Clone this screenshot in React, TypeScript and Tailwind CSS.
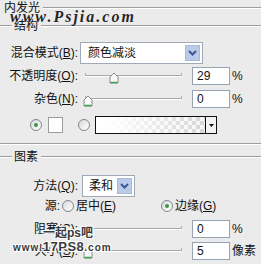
import type { ReactNode } from 'react';

const font = 'font-["Liberation_Sans","Noto_Sans_CJK_SC",sans-serif]';

function Line({ className = '' }: { className?: string }) {
    return <div className={`h-[2px] border-t border-[#9d9d9d] border-b border-b-white ${className}`} />;
}

function Legend({ text, lead }: { text: string; lead: number }) {
    return (
        <div className="flex items-center h-[12px]">
            {lead > 0 ? <Line className="w-[12px]" /> : null}
            <span className={lead > 0 ? 'ml-[2px] mr-[3px]' : 'ml-[4px] mr-[3px]'}>{text}</span>
            <Line className="flex-1" />
        </div>
    );
}

function Label({ children, w = 78 }: { children: ReactNode; w?: number }) {
    return (
        <div className={w === 78 ? 'w-[78px] text-right whitespace-nowrap' : 'w-[60px] text-right whitespace-nowrap'}>
            {children}
        </div>
    );
}

function Chevron() {
    return (
        <div className="shrink-0 w-[15px] h-[16px] bg-[#bccaea] border border-[#a9b8dc] flex items-center justify-center">
            <svg width="9" height="6" viewBox="0 0 9 6">
                <path d="M1 1 L4.5 4.5 L8 1" fill="none" stroke="#3d5696" strokeWidth="2" />
            </svg>
        </div>
    );
}

function Thumb({ left }: { left: number }) {
    return (
        <div className="absolute top-[-4px]" style={{ left }}>
            <svg width="10" height="12" viewBox="0 0 10 12">
                <path d="M1 5 L5 1 L9 5 L9 11 L1 11 Z" fill="#fafafa" stroke="#8a8a8a" strokeWidth="1" />
                <path d="M1.5 10.5 L8.5 10.5" stroke="#3fa34a" strokeWidth="1.5" />
            </svg>
        </div>
    );
}

function Slider({ pos }: { pos: number }) {
    return (
        <div className="relative ml-[7px] w-[97px] h-[2px] border-t border-[#a8a8a8] border-b border-b-white">
            <div className="absolute left-0 top-[-3px] w-px h-[3px] bg-[#b0b0b0]" />
            <div className="absolute right-0 top-[-3px] w-px h-[3px] bg-[#b0b0b0]" />
            <Thumb left={pos} />
        </div>
    );
}

function Field({ value }: { value: string }) {
    return (
        <div className="ml-[10px] w-[38px] h-[18px] bg-white border border-[#97a3b4] pl-[4px] flex items-center">
            {value}
        </div>
    );
}

function Radio({ on }: { on?: boolean }) {
    return (
        <div className="w-[12px] h-[12px] rounded-full border border-[#7e8893] bg-[linear-gradient(135deg,#d9d9d9,#ffffff)] flex items-center justify-center">
            {on ? <div className="w-[4px] h-[4px] rounded-full bg-[#3a9a42]" /> : null}
        </div>
    );
}

export default function App() {
    return (
        <div className={`relative w-[261px] h-[264px] overflow-hidden bg-[#ebebeb] text-[12px] leading-none text-[#111] ${font}`}>
            <div className="flex flex-col pt-[2px]">
                {/* 内发光 */}
                <Legend text="内发光" lead={0} />

                {/* 结构 */}
                <div className="mt-[6px]">
                    <Legend text="结构" lead={12} />
                </div>

                <div className="flex items-center mt-[10px] h-[22px]">
                    <Label>混合模式(<u>B</u>):</Label>
                    <div className="ml-[2px] w-[123px] h-[22px] bg-white border border-[#a0a9b6] flex items-center justify-between pl-[7px] pr-[2px]">
                        <span>颜色减淡</span>
                        <Chevron />
                    </div>
                </div>

                <div className="flex items-center mt-[3px] h-[18px]">
                    <Label>不透明度(<u>O</u>):</Label>
                    <Slider pos={24} />
                    <Field value="29" />
                    <span className="ml-[2px]">%</span>
                </div>

                <div className="flex items-center mt-[5px] h-[18px]">
                    <Label>杂色(<u>N</u>):</Label>
                    <Slider pos={-2} />
                    <Field value="0" />
                    <span className="ml-[2px]">%</span>
                </div>

                <div className="flex items-center mt-[8px] h-[18px]">
                    <div className="ml-[30px]">
                        <Radio on />
                    </div>
                    <div className="ml-[6px] w-[15px] h-[16px] bg-white border border-[#9c9c9c]" />
                    <div className="ml-[15px]">
                        <Radio />
                    </div>
                    <div className="ml-[5px] w-[122px] h-[18px] border border-[#111] flex">
                        <div className="flex-1 bg-[linear-gradient(to_right,#ffffff_10%,rgba(255,255,255,0)),conic-gradient(#d6d6d6_25%,#f6f6f6_0_50%,#d6d6d6_0_75%,#f6f6f6_0)] bg-[length:100%_100%,8px_8px]" />
                        <div className="w-[11px] border-l border-[#111] bg-[#f2f2f2] flex items-center justify-center">
                            <svg width="5" height="3" viewBox="0 0 5 3">
                                <path d="M0 0 L5 0 L2.5 3 Z" fill="#111" />
                            </svg>
                        </div>
                    </div>
                </div>

                <Line className="mt-[9px]" />

                {/* 图素 */}
                <div className="mt-[6px]">
                    <Legend text="图素" lead={12} />
                </div>

                <div className="flex items-center mt-[12px] h-[22px]">
                    <Label>方法(<u>Q</u>):</Label>
                    <div className="ml-[4px] w-[53px] h-[22px] bg-white border border-[#a0a9b6] flex items-center justify-between pl-[6px] pr-[2px] whitespace-nowrap">
                        <span>柔和</span>
                        <Chevron />
                    </div>
                </div>

                <div className="flex items-center mt-[3px] h-[12px]">
                    <Label w={60}>源:</Label>
                    <div className="ml-[2px]">
                        <Radio />
                    </div>
                    <span className="ml-[2px]">居中(<u>E</u>)</span>
                    <div className="ml-[45px]">
                        <Radio on />
                    </div>
                    <span className="ml-[2px]">边缘(<u>G</u>)</span>
                </div>

                <div className="flex items-center mt-[8px] h-[18px]">
                    <Label>阻塞(<u>C</u>):</Label>
                    <Slider pos={-2} />
                    <Field value="0" />
                    <span className="ml-[2px]">%</span>
                </div>

                <div className="flex items-center mt-[4px] h-[18px]">
                    <Label>大小(<u>S</u>):</Label>
                    <Slider pos={-2} />
                    <Field value="5" />
                    <span className="ml-[2px]">像素</span>
                </div>
            </div>

            {/* watermarks */}
            <div className='absolute left-[10px] top-[9px] font-["Liberation_Serif",serif] font-bold italic text-[16px] tracking-[2px] text-[#262626] [text-shadow:0_0_1px_#fff]'>
                www.Psjia.com
            </div>
            <div className="absolute left-[43px] top-[227px] font-bold text-[12px] text-[#3a3a3a] [text-shadow:1px_1px_0_#fff,-1px_-1px_0_#fff,1px_-1px_0_#fff,-1px_1px_0_#fff]">
                一起ps吧
            </div>
            <div className="absolute left-[13px] top-[240px] flex items-end font-bold text-[#3a3a3a] [text-shadow:1px_1px_0_#fff,-1px_-1px_0_#fff,1px_-1px_0_#fff,-1px_1px_0_#fff]">
                <span className="text-[10px] tracking-[1px]">www.</span>
                <span className="text-[13px] tracking-[0.5px]">17PS8</span>
                <span className="text-[10px] tracking-[1px]">.com</span>
            </div>
        </div>
    );
}
